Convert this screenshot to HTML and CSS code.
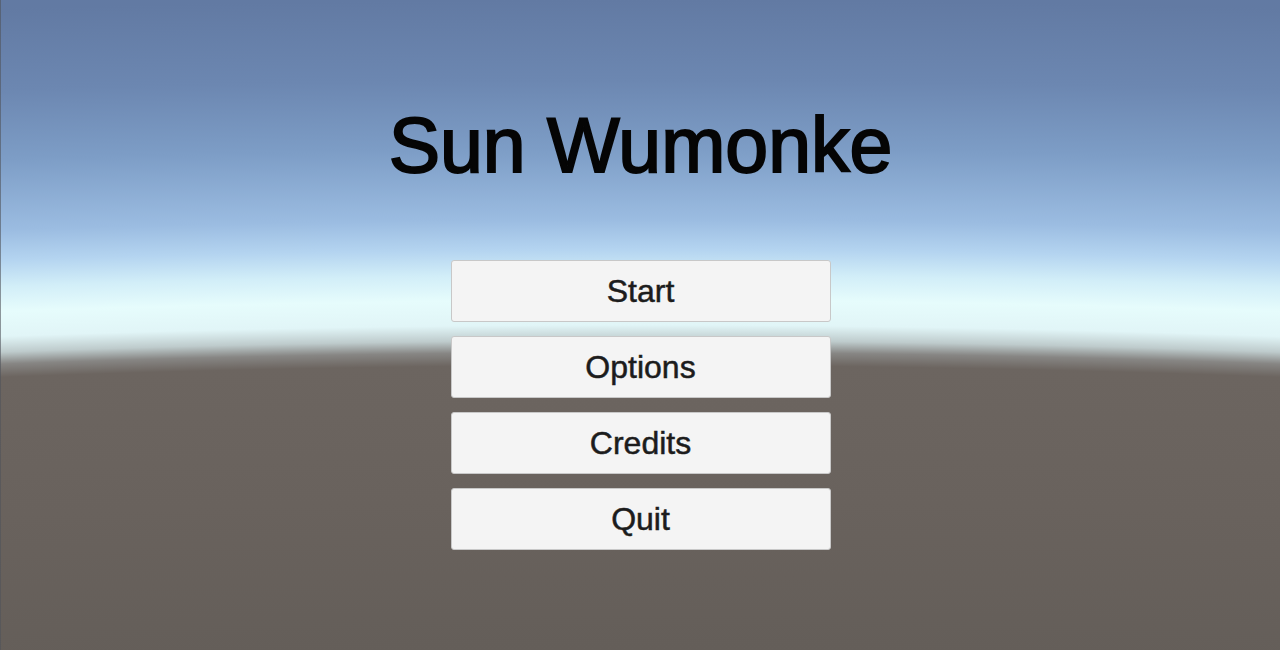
FILE: index.html
```html
<!DOCTYPE html>
<html lang="en">
  <head>
    <meta charset="UTF-8" />
    <meta name="viewport" content="width=device-width, initial-scale=1.0" />
    <title>Sun Wumonke</title>
    <link rel="stylesheet" href="styles.css">
  </head>
  <body>
    <div class="scene">
      <div class="main-menu">
        <h1 class="title">Sun Wumonke</h1>

        <div class="menu-buttons">
          <button class="menu-btn" id="btn-start">Start</button>
          <button class="menu-btn" id="btn-options">Options</button>
          <button class="menu-btn" id="btn-credits">Credits</button>
          <button class="menu-btn" id="btn-quit">Quit</button>
        </div>
      </div>
    </div>
  </body>
</html>
```

FILE: styles.css
```css
html, body {
    margin: 0;
    padding: 0;
    height: 100%;
}
body {
    font-family: "Liberation Sans", Arial, sans-serif;
    overflow: hidden;
}

/* default skybox: sky fading to a white haze, then the ground plane */
.scene {
    width: 100%;
    height: 100vh;
    box-sizing: border-box;
    border-left: 1px solid rgba(80, 84, 90, 0.6);
    background: radial-gradient(
        5600px 1300px at 50% 1300px,
        rgb(100, 94, 89) 50%,
        rgb(105, 98, 93) 61.5%,
        rgb(108, 101, 96) 71.9%,
        rgb(135, 134, 132) 72.9%,
        rgb(190, 203, 204) 73.8%,
        rgb(225, 245, 247) 75%,
        rgb(230, 252, 252) 76.9%,
        rgb(210, 238, 248) 78.8%,
        rgb(180, 212, 240) 80.8%,
        rgb(155, 188, 225) 83.1%,
        rgb(125, 157, 198) 88.5%,
        rgb(108, 135, 177) 93.8%,
        rgb(98, 122, 163) 100%
    );
}

.main-menu {
    display: flex;
    flex-direction: column;
    align-items: center;
    padding-top: 107px;
}

.title {
    margin: 0;
    font-size: 77px;
    line-height: 77px;
    font-weight: normal;
    color: #050505;
    -webkit-text-stroke: 2px #050505;
}

.menu-buttons {
    display: flex;
    flex-direction: column;
    gap: 14px;
    margin-top: 76px;
}

.menu-btn {
    width: 380px;
    height: 62px;
    box-sizing: border-box;
    display: flex;
    align-items: center;
    justify-content: center;
    background-color: #f4f4f4;
    border: 1px solid #c8c8c8;
    border-radius: 3px;
    font-family: inherit;
    font-size: 32px;
    color: #1c1c1c;
    -webkit-text-stroke: 0.5px #1c1c1c;
    padding: 0;
    cursor: pointer;
}
.menu-btn:hover {
    background-color: #ffffff;
}
```
